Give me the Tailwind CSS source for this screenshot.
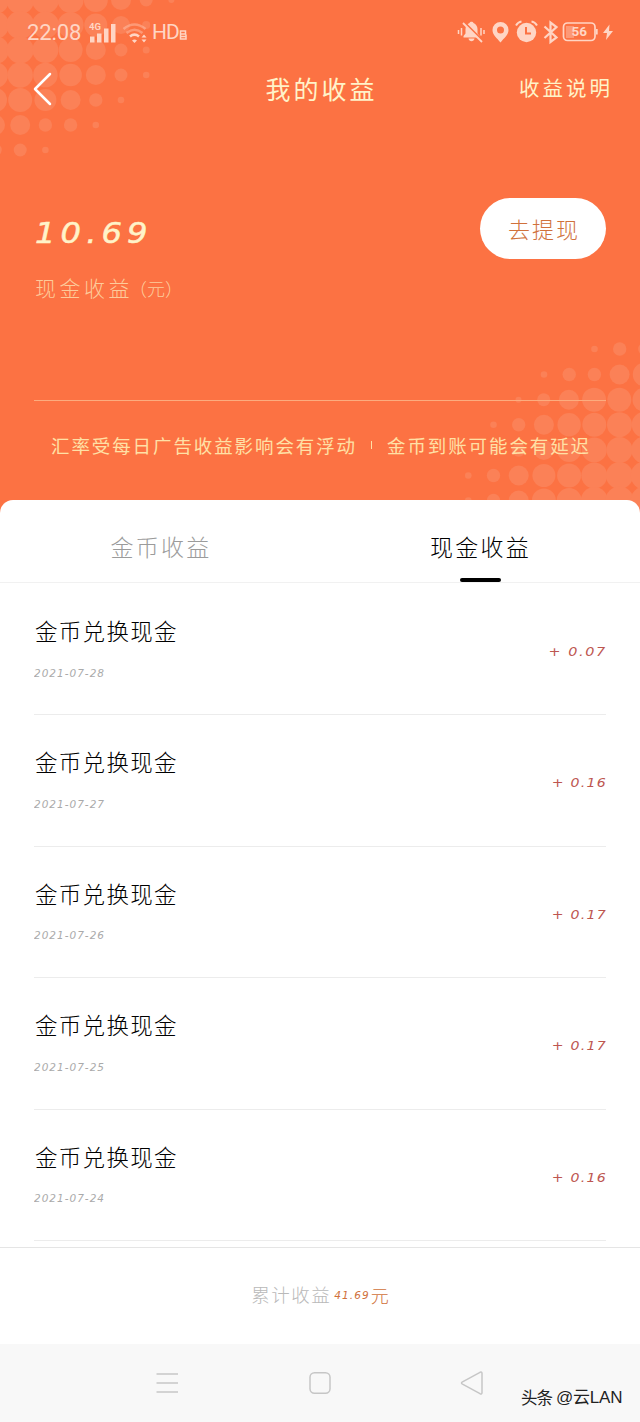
<!DOCTYPE html>
<html lang="zh-CN">
<head>
<meta charset="utf-8">
<title>我的收益</title>
<script src="https://cdn.jsdelivr.net/npm/@tailwindcss/browser@4"></script>
</head>
<body class="w-[640px] h-[1422px] overflow-hidden bg-white font-['Noto_Sans_CJK_SC',sans-serif] font-light">
<div class="relative flex h-[1422px] w-[640px] flex-col overflow-hidden">
  <header class="relative flex h-[500px] shrink-0 flex-col bg-[#fc7243]">
    <svg class="absolute left-0 top-0" width="640" height="520" viewBox="0 0 640 520">
      <path d="M0 498h640v22H0z" fill="#fc7243"/>
      <g id="dots" fill="#fb8157"></g>
    </svg>

    <div class="relative flex h-[64px] items-center justify-between pl-[27px] pr-[26px] text-[#ffd5c4]">
      <div class="flex items-center pt-px">
        <span class="w-[56px] whitespace-nowrap font-[Roboto] text-[22px] font-normal leading-none tracking-[-0.1px]">22:08</span>
        <svg class="ml-[6px]" width="28" height="22" viewBox="0 0 28 22" fill="currentColor">
          <text x="0" y="8" font-family="Roboto" font-size="9.500" font-weight="700">4G</text>
          <path d="M1 14.500h4.500v6H1zM8 11.500h4.500v9H8zM15 6.500h4.500v14h-4.500zM22 2h4.500v18.500h-4.500z"/>
        </svg>
        <svg class="ml-[5px]" width="26" height="22" viewBox="0 0 26 22" fill="none" stroke="currentColor" stroke-width="2.600">
          <path d="M1.500 7Q12.500-2 23.500 7M4.500 11Q12.500 4.500 20.500 11" opacity=".4"/>
          <path d="M8 14.500q4.500-3.600 9 0"/>
          <path d="M10 18.500q2.500-2 5 0l-2.500 2.500zM19.500 15.500l2.500-3 2.500 3zM19.500 17.500l2.500 3 2.500-3z" fill="currentColor" stroke="none"/>
        </svg>
        <span class="ml-[4px] font-[Roboto] text-[21px] font-normal leading-none tracking-[-1px]">HD</span>
        <svg class="mt-[5px]" width="9" height="10" viewBox="0 0 9 10" fill="none" stroke="currentColor" stroke-width="1.500"><path d="M1.500 3.500V1h5v3h-5v5h5.500V4.500M1.500 6.500h5"/></svg>
      </div>
      <svg width="158" height="26" viewBox="456 19 158 26" fill="currentColor">
        <path d="M463.500 37.500v-1.500l2-2.500v-4.500a7 7 0 0 1 4-6c.5-1.700 3.500-1.700 4 0a7 7 0 0 1 4 6v4.500l2 2.500v1.500zM468.500 38.500h6c-.5 3.500-5.500 3.500-6 0z"/>
        <path d="M464.500 22.500l18 18" stroke="#fc7243" stroke-width="2"/>
        <path d="M463 23l19 19" stroke="currentColor" stroke-width="1.800"/>
        <path d="M458.500 30v4M461.500 28v7.500M484 30v4M481 28v7.500" stroke="currentColor" stroke-width="1.500" fill="none"/>
        <path fill-rule="evenodd" d="M500.500 22a8 8 0 0 0-8 8c0 5 4.500 8 8 12.500 3.500-4.500 8-7.500 8-12.500a8 8 0 0 0-8-8zm0 4.500a3.500 3.500 0 1 1 0 7 3.500 3.500 0 0 1 0-7z"/>
        <circle cx="526.500" cy="32.500" r="9.700"/>
        <path d="M526 27v6.500h5" fill="none" stroke="#fc7243" stroke-width="2"/>
        <path d="M516 25.500q2-3.500 5.500-4M537 25.500q-2-3.500-5.500-4" fill="none" stroke="currentColor" stroke-width="2"/>
        <path d="M544.500 26.500l12 11-6 4.500V22.500l6 4.500-12 11" fill="none" stroke="currentColor" stroke-width="2.200"/>
        <rect x="563.500" y="23" width="31.500" height="17.500" rx="4" fill="none" stroke="currentColor" stroke-width="1.700"/>
        <path d="M566 26h8v12h-8z" opacity=".4"/>
        <path d="M596 29h1.700v5.500H596zM609.500 24.500l-6.500 8.500h4l-1 7 7-9h-4z"/>
        <text x="571.500" y="36.300" font-family="Roboto" font-size="13.500" font-weight="700">56</text>
      </svg>
    </div>

    <div class="relative grid h-[50px] grid-cols-3 items-center text-[#fff3c9]">
      <svg class="ml-[32px]" width="22" height="36" viewBox="0 0 22 36" fill="none" stroke="#fff" stroke-width="2.500" stroke-linecap="round" stroke-linejoin="round"><path d="M18 3L3 18l15 15"/></svg>
      <h1 class="mt-[-2px] pl-[3px] text-center text-[25px] font-normal leading-none tracking-[3px]">我的收益</h1>
      <span class="mt-[-3px] pr-[27px] text-right text-[20.500px] font-normal leading-none tracking-[3px]">收益说明</span>
    </div>

    <div class="relative mt-[84px] flex h-[203px] items-start justify-between border-b border-[#fcac7e] mx-[34px]">
      <div class="pl-[1px]">
        <div class="mt-[21px] flex h-[30px] origin-left scale-x-[1.13] items-center font-['DejaVu_Sans'] text-[28.500px] font-normal italic leading-none tracking-[4.500px] text-[#fff3c9] [-webkit-text-stroke:0.5px_#fff3c9]">10.69</div>
        <div class="mt-[28px] text-[21px] leading-none tracking-[3.500px] text-[#fdcb9b]"><span>现金收益</span><span class="ml-[-4px] inline-block text-[18px] tracking-[0px]">（元）</span></div>
      </div>
      <button class="flex h-[61px] w-[126px] items-center justify-center rounded-full bg-white pb-[2px] pl-[2px] text-[22px] leading-none tracking-[2px] text-[#d0713b]">去提现</button>
    </div>

    <p class="relative mt-[35px] flex items-center whitespace-nowrap pl-[51px] text-[18.500px] font-normal leading-none text-[#ffe0a6]"><span class="w-[306px] tracking-[1.900px]">汇率受每日广告收益影响会有浮动</span><span class="ml-[14px] h-[8px] w-px bg-[#ffe0a6]"></span><span class="ml-[15px] tracking-[1.900px]">金币到账可能会有延迟</span></p>
  </header>

  <main class="relative flex h-[747px] shrink-0 flex-col overflow-hidden rounded-t-[13px] bg-white">
    <nav class="grid h-[83px] shrink-0 grid-cols-2 border-b border-[#f1f1f1] text-[23px] leading-none tracking-[2.300px]">
      <div class="flex items-start justify-center pt-[35px] pl-[2px] text-[#9b9b9b]">金币收益</div>
      <div class="flex flex-col items-center justify-between pt-[35px] pl-[1px] text-black"><span>现金收益</span><i class="h-[4px] w-[41px] rounded-full bg-black"></i></div>
    </nav>
    <section class="flex shrink-0 flex-col px-[34px] pt-px">
      <div class="flex h-[131.400px] items-start justify-between border-b border-[#ececec]">
        <div><div class="mt-[35px] pl-[1px] text-[22.500px] leading-none tracking-[1.300px] text-black">金币兑换现金</div><div class="mt-[27px] origin-left scale-x-[1.05] font-['DejaVu_Sans'] text-[10px] font-normal italic leading-none tracking-[0.950px] text-[#aaa]">2021-07-28</div></div>
        <div class="mt-[62px] mr-[-1px] origin-right scale-x-[1.15] font-['DejaVu_Sans'] text-[12.500px] font-normal italic leading-none tracking-[1.400px] text-[#bd5650]">+ 0.07</div>
      </div>
      <div class="flex h-[131.400px] items-start justify-between border-b border-[#ececec]">
        <div><div class="mt-[35px] pl-[1px] text-[22.500px] leading-none tracking-[1.300px] text-black">金币兑换现金</div><div class="mt-[27px] origin-left scale-x-[1.05] font-['DejaVu_Sans'] text-[10px] font-normal italic leading-none tracking-[0.950px] text-[#aaa]">2021-07-27</div></div>
        <div class="mt-[62px] mr-[-1px] origin-right scale-x-[1.13] font-['DejaVu_Sans'] text-[12.500px] font-normal italic leading-none tracking-[1.100px] text-[#bd5650]">+ 0.16</div>
      </div>
      <div class="flex h-[131.400px] items-start justify-between border-b border-[#ececec]">
        <div><div class="mt-[35px] pl-[1px] text-[22.500px] leading-none tracking-[1.300px] text-black">金币兑换现金</div><div class="mt-[27px] origin-left scale-x-[1.05] font-['DejaVu_Sans'] text-[10px] font-normal italic leading-none tracking-[0.950px] text-[#aaa]">2021-07-26</div></div>
        <div class="mt-[62px] mr-[-1px] origin-right scale-x-[1.13] font-['DejaVu_Sans'] text-[12.500px] font-normal italic leading-none tracking-[1.100px] text-[#bd5650]">+ 0.17</div>
      </div>
      <div class="flex h-[131.400px] items-start justify-between border-b border-[#ececec]">
        <div><div class="mt-[35px] pl-[1px] text-[22.500px] leading-none tracking-[1.300px] text-black">金币兑换现金</div><div class="mt-[27px] origin-left scale-x-[1.05] font-['DejaVu_Sans'] text-[10px] font-normal italic leading-none tracking-[0.950px] text-[#aaa]">2021-07-25</div></div>
        <div class="mt-[62px] mr-[-1px] origin-right scale-x-[1.13] font-['DejaVu_Sans'] text-[12.500px] font-normal italic leading-none tracking-[1.100px] text-[#bd5650]">+ 0.17</div>
      </div>
      <div class="flex h-[131.400px] items-start justify-between border-b border-[#ececec]">
        <div><div class="mt-[35px] pl-[1px] text-[22.500px] leading-none tracking-[1.300px] text-black">金币兑换现金</div><div class="mt-[27px] origin-left scale-x-[1.05] font-['DejaVu_Sans'] text-[10px] font-normal italic leading-none tracking-[0.950px] text-[#aaa]">2021-07-24</div></div>
        <div class="mt-[62px] mr-[-1px] origin-right scale-x-[1.13] font-['DejaVu_Sans'] text-[12.500px] font-normal italic leading-none tracking-[1.100px] text-[#bd5650]">+ 0.16</div>
      </div>
    </section>
  </main>

  <div class="flex h-[97px] shrink-0 items-center justify-center border-t border-[#e5e5e5] bg-white pb-[3px] leading-none">
    <span class="text-[18.500px] tracking-[1.500px] text-[#b9b9b9]">累计收益</span>
    <span class="ml-[3px] mt-[1px] font-['DejaVu_Sans'] text-[10.500px] font-normal italic tracking-[1.100px] text-[#d0713b]">41.69</span>
    <span class="ml-px text-[18px] text-[#d0713b]">元</span>
  </div>

  <footer class="flex h-[78px] shrink-0 items-center bg-[#f8f8f8] text-[#c6c6c6]">
    <svg class="ml-[155px]" width="24" height="24" viewBox="0 0 24 24" fill="none" stroke="currentColor" stroke-width="1.600"><path d="M1.500 3h21.500M1.500 12h21.500M1.500 21h21.500"/></svg>
    <svg class="ml-[129px]" width="24" height="24" viewBox="0 0 24 24" fill="none" stroke="currentColor" stroke-width="1.500"><rect x="2" y="1.800" width="20" height="20.400" rx="4.500"/></svg>
    <svg class="ml-[128px]" width="25" height="26" viewBox="0 0 25 26" fill="none" stroke="currentColor" stroke-width="1.500" stroke-linejoin="round"><path d="M2.500 11.800L20 2.300q2-.8 2 1.200v19q0 2-2 1.200L2.500 14.200q-2-1.200 0-2.400z"/></svg>
    <span class="ml-[36px] mt-[29px] flex items-center whitespace-nowrap text-[16.500px] font-normal leading-none text-[#222] [text-shadow:0_0_1px_#fff]"><span class="tracking-[-1px]">头条</span><span class="ml-[4px] font-['Liberation_Sans','Noto_Sans_CJK_SC',sans-serif] text-[17px] tracking-[-0.200px]">@云LAN</span></span>
  </footer>
</div>
<script>
  // Halftone corners: each row is [y, first x, radii...] on a 25.2px grid.
  const rows = [
    [0, -5, 14, 14, 13.5, 13, 12, 10, 6.5, 3],
    [25, -5, 14, 14, 13.5, 13, 11.5, 9, 4],
    [50, -5, 14, 13.5, 13, 12, 10, 6.5, 3.5],
    [75, -5, 13, 12.7, 12.3, 11.3, 10, 6.5, 3.3],
    [100, -5, 12, 12, 11, 10, 6.7, 3.3],
    [125, -5, 10, 10, 6.7, 6.7, 3.3],
    [150, -5, 6.7, 6.5, 3.3],
    [349, 594.5, 3.3, 6.7, 6.7],
    [374.5, 544, 3.3, 6.7, 6.7, 10, 12],
    [399.7, 518.5, 3, 6.5, 10, 12, 12, 12],
    [424.7, 493.5, 3.3, 6.7, 10, 11.7, 12, 12.5, 13],
    [450, 493.5, 3.3, 6.7, 10, 12, 12.5, 13, 13.5],
    [475.5, 468.3, 3.3, 6.7, 10, 11.5, 12, 13, 13.5, 14],
    [500.5, 468.3, 3.3, 6.7, 10, 12, 12.5, 13.5, 14, 14]
  ];
  const g = document.getElementById('dots');
  for (const [y, x0, ...radii] of rows) radii.forEach((r, i) => {
    const c = document.createElementNS('http://www.w3.org/2000/svg', 'circle');
    c.setAttribute('cx', x0 + i * 25.2);
    c.setAttribute('cy', y);
    c.setAttribute('r', r);
    g.appendChild(c);
  });
</script>
</body>
</html>
